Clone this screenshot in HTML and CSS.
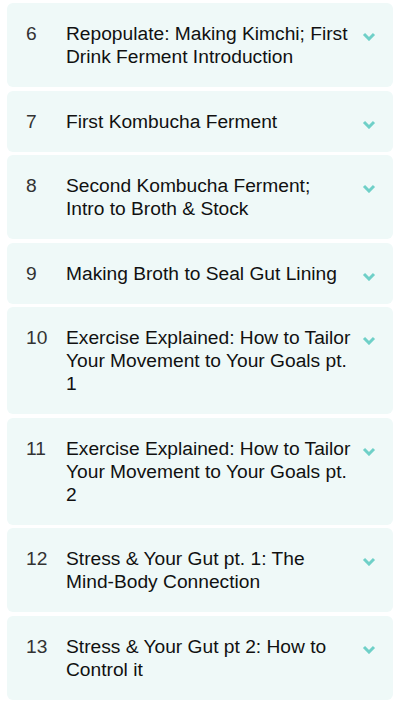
FILE: index.html
```html
<!DOCTYPE html>
<html lang="en">
<head>
  <meta charset="UTF-8">
  <title>Lessons</title>
  <link rel="stylesheet" href="styles.css">
</head>
<body>
<ul class="lessons">
  <li class="lesson">
    <span class="num">6</span>
    <span class="name">Repopulate: Making Kimchi; First Drink Ferment Introduction</span>
    <svg class="chev" viewBox="0 0 14 9"><path d="M2 2l5 5 5-5"/></svg>
  </li>
  <li class="lesson">
    <span class="num">7</span>
    <span class="name">First Kombucha Ferment</span>
    <svg class="chev" viewBox="0 0 14 9"><path d="M2 2l5 5 5-5"/></svg>
  </li>
  <li class="lesson">
    <span class="num">8</span>
    <span class="name">Second Kombucha Ferment;<br>Intro to Broth &amp; Stock</span>
    <svg class="chev" viewBox="0 0 14 9"><path d="M2 2l5 5 5-5"/></svg>
  </li>
  <li class="lesson">
    <span class="num">9</span>
    <span class="name">Making Broth to Seal Gut Lining</span>
    <svg class="chev" viewBox="0 0 14 9"><path d="M2 2l5 5 5-5"/></svg>
  </li>
  <li class="lesson">
    <span class="num">10</span>
    <span class="name">Exercise Explained: How to Tailor Your Movement to Your Goals pt. 1</span>
    <svg class="chev" viewBox="0 0 14 9"><path d="M2 2l5 5 5-5"/></svg>
  </li>
  <li class="lesson">
    <span class="num">11</span>
    <span class="name">Exercise Explained: How to Tailor Your Movement to Your Goals pt. 2</span>
    <svg class="chev" viewBox="0 0 14 9"><path d="M2 2l5 5 5-5"/></svg>
  </li>
  <li class="lesson">
    <span class="num">12</span>
    <span class="name">Stress &amp; Your Gut pt. 1: The <span class="nobr">Mind-Body</span> Connection</span>
    <svg class="chev" viewBox="0 0 14 9"><path d="M2 2l5 5 5-5"/></svg>
  </li>
  <li class="lesson">
    <span class="num">13</span>
    <span class="name">Stress &amp; Your Gut pt 2: How to Control it</span>
    <svg class="chev" viewBox="0 0 14 9"><path d="M2 2l5 5 5-5"/></svg>
  </li>
</ul>
</body>
</html>
```

FILE: styles.css
```css
* {
  margin: 0;
  padding: 0;
  box-sizing: border-box;
}
body {
  background: #fff;
  font-family: "Liberation Sans", Arial, sans-serif;
  color: #111;
}
ul, li {
  list-style: none;
}
.lessons {
  display: flex;
  flex-direction: column;
  gap: 3.5px;
  padding: 3px 7px 0 7px;
}
.lesson {
  display: flex;
  align-items: flex-start;
  background: #eff9f8;
  border-radius: 6px;
  padding: 19px 0 19px 0;
  font-size: 19.2px;
  line-height: 23px;
}
.num {
  width: 59px;
  flex: none;
  padding-left: 19px;
  color: #333;
}
.name {
  flex: 1;
  min-width: 0;
}
.nobr {
  white-space: nowrap;
}
.chev {
  flex: none;
  width: 14px;
  height: 9px;
  margin: 10px 17px 0 4px;
  fill: none;
  stroke: #6fd0c8;
  stroke-width: 3;
}
```
